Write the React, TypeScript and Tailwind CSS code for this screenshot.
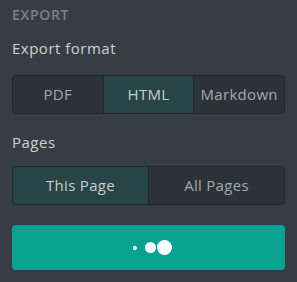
import { useState } from "react";

const formats = ["PDF", "HTML", "Markdown"];
const pageOptions = ["This Page", "All Pages"];

function Segmented({
  options,
  value,
  onChange,
}: {
  options: string[];
  value: string;
  onChange: (v: string) => void;
}) {
  return (
    <div className="flex h-[39px] rounded-[4px] border border-[#22272d] bg-[#2c3239] overflow-hidden">
      {options.map((opt, i) => (
        <button
          key={opt}
          onClick={() => onChange(opt)}
          className={
            "flex-1 flex items-center justify-center text-[15px] tracking-[0.3px] " +
            (i > 0 ? "border-l border-[#22272d] " : "") +
            (opt === value
              ? "bg-[#274447] text-[#c9cdd0]"
              : "text-[#a3a8ad]")
          }
        >
          {opt}
        </button>
      ))}
    </div>
  );
}

export default function App() {
  const [format, setFormat] = useState("HTML");
  const [pages, setPages] = useState("This Page");

  return (
    <div
      className="w-[297px] h-[282px] bg-[#373d45] px-3 pt-[6px]"
      style={{ fontFamily: "'Open Sans', 'Noto Sans', sans-serif" }}
    >
      <div className="text-[14px] font-semibold tracking-[0.7px] text-[#7b8187] leading-[18px]">
        EXPORT
      </div>
      <div className="mt-[14px] text-[15px] tracking-[0.5px] text-[#cdd1d4] leading-[20px]">
        Export format
      </div>
      <div className="mt-[17px]">
        <Segmented options={formats} value={format} onChange={setFormat} />
      </div>
      <div className="mt-[18px] text-[15px] tracking-[0.5px] text-[#cdd1d4] leading-[20px]">
        Pages
      </div>
      <div className="mt-[14px]">
        <Segmented options={pageOptions} value={pages} onChange={setPages} />
      </div>
      <button className="mt-5 w-full h-[45px] rounded-[4px] bg-[#0aa190] flex items-center justify-center pl-[7px]">
        <span className="w-1 h-1 rounded-full bg-white" />
        <span className="ml-[8px] w-[11px] h-[11px] rounded-full bg-white" />
        <span className="ml-[1px] w-[15px] h-[15px] rounded-full bg-white" />
      </button>
    </div>
  );
}
